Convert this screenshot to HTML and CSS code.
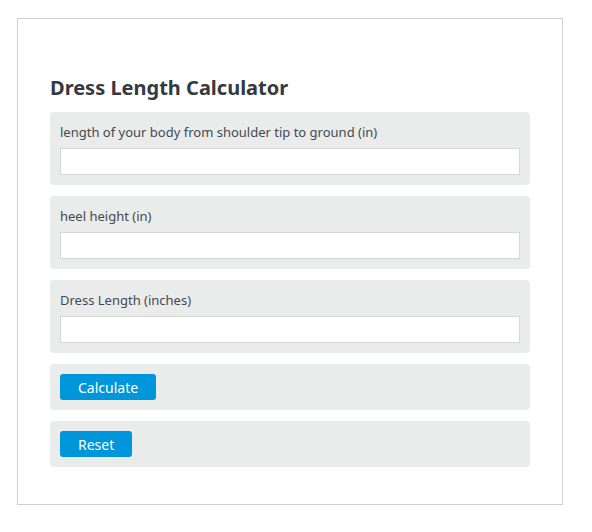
FILE: index.html
```html
<!DOCTYPE html>
<html lang="en">
<head>
    <meta charset="UTF-8">
    <title>Dress Length Calculator</title>
    <link rel="stylesheet" href="styles.css">
</head>
<body>
    <div class="calc-box">
        <h2 class="calc-title">Dress Length Calculator</h2>

        <div class="row">
            <label for="bodyLength">length of your body from shoulder tip to ground (in)</label>
            <input type="text" id="bodyLength" class="field">
        </div>

        <div class="row">
            <label for="heelHeight">heel height (in)</label>
            <input type="text" id="heelHeight" class="field">
        </div>

        <div class="row">
            <label for="dressLength">Dress Length (inches)</label>
            <input type="text" id="dressLength" class="field">
        </div>

        <div class="row">
            <button class="btn">Calculate</button>
        </div>

        <div class="row">
            <button class="btn">Reset</button>
        </div>
    </div>
</body>
</html>
```

FILE: styles.css
```css
body {
    margin: 0;
    background: #fff;
    font-family: 'Noto Sans', 'Open Sans', sans-serif;
    color: #3a3f45;
}

.calc-box {
    width: 480px;
    margin: 18px 0 0 17px;
    padding: 55px 32px 37px;
    border: 1px solid #cfcfd4;
}

.calc-title {
    margin: 0 0 10px;
    font-size: 20px;
    line-height: 28px;
    font-weight: 700;
    color: #343a42;
}

.row {
    background: #eaebeb;
    border-radius: 4px;
    padding: 10px;
    margin-bottom: 11px;
}

.row:last-child { margin-bottom: 0; }

.row label {
    display: block;
    font-size: 13px;
    line-height: 20px;
    margin-bottom: 6px;
    color: #444a50;
}

.field {
    display: block;
    box-sizing: border-box;
    width: 100%;
    height: 27px;
    border: 1px solid #d6d6d6;
    background: #fff;
    margin: 0;
}

.btn {
    display: block;
    height: 26px;
    padding: 0 18px;
    border: 0;
    border-radius: 3px;
    background: #0096db;
    color: #fff;
    font-family: 'Noto Sans', 'Open Sans', sans-serif;
    font-size: 14px;
}
```
